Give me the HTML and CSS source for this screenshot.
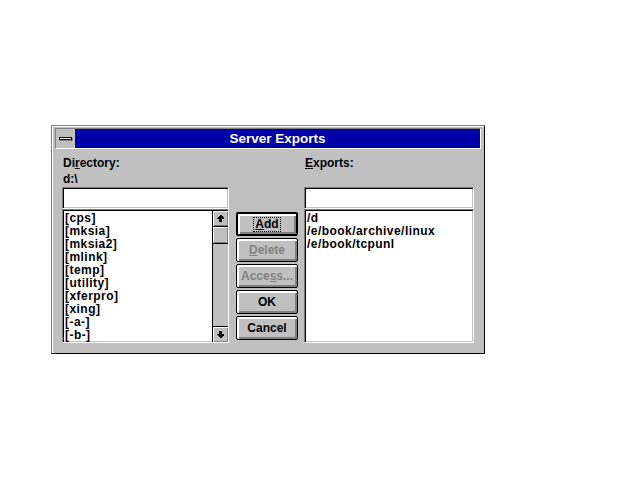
FILE: index.html
```html
<!DOCTYPE html>
<html lang="en">
  <head>
    <meta charset="UTF-8" />
    <title>Server Exports</title>
    <link rel="stylesheet" href="styles.css">
  </head>
  <body>
    <div class="dialog">
      <div class="caption">
        <div class="sysmenu"><span class="dash"></span></div>
        <div class="title">Server Exports</div>
      </div>

      <div class="content">
        <!-- directory side -->
        <div class="left">
          <div class="label">Di<u>r</u>ectory:</div>
          <div class="label">d:\</div>
          <div class="edit"></div>
          <div class="listbox">
            <ul class="items">
              <li>[cps]</li>
              <li>[mksia]</li>
              <li>[mksia2]</li>
              <li>[mlink]</li>
              <li>[temp]</li>
              <li>[utility]</li>
              <li>[xferpro]</li>
              <li>[xing]</li>
              <li>[-a-]</li>
              <li>[-b-]</li>
            </ul>
            <div class="scrollbar">
              <div class="sb-btn up">
                <svg width="7" height="7" viewBox="0 0 7 7" shape-rendering="crispEdges"><polygon points="3,0 4,0 7,3 7,4 5,4 5,7 2,7 2,4 0,4 0,3" fill="#000"/></svg>
              </div>
              <div class="sb-thumb"></div>
              <div class="sb-track"></div>
              <div class="sb-btn down">
                <svg width="7" height="7" viewBox="0 0 7 7" shape-rendering="crispEdges"><polygon points="2,0 5,0 5,3 7,3 7,4 4,7 3,7 0,4 0,3 2,3" fill="#000"/></svg>
              </div>
            </div>
          </div>
        </div>

        <div class="buttons">
          <button class="btn default"><span class="focus"><u>A</u>dd</span></button>
          <button class="btn disabled"><u>D</u>elete</button>
          <button class="btn disabled">Acce<u>s</u>s...</button>
          <button class="btn">OK</button>
          <button class="btn">Cancel</button>
        </div>

        <!-- exports side -->
        <div class="right">
          <div class="label"><u>E</u>xports:</div>
          <div class="label"></div>
          <div class="edit"></div>
          <div class="listbox">
            <ul class="items">
              <li>/d</li>
              <li>/e/book/archive/linux</li>
              <li>/e/book/tcpunl</li>
            </ul>
          </div>
        </div>
      </div>
    </div>
  </body>
</html>
```

FILE: styles.css
```css
body {
    margin: 0;
    background: #fff;
    font-family: "Liberation Sans", Arial, sans-serif;
    color: #000;
}

.dialog {
    margin: 125px 0 0 51px;
    width: 434px;
    height: 229px;
    box-sizing: border-box;
    background: #c0c0c0;
    border: 1px solid;
    border-color: #808080 #000 #000 #808080;
    box-shadow: inset 1px 1px #fff;
    padding: 2px 3px 0 3px;
}

.caption {
    display: flex;
    height: 21px;
    box-sizing: border-box;
    border: 1px solid;
    border-color: #808080 #fff #fff #808080;
}

.sysmenu {
    width: 19px;
    background: #c0c0c0;
    display: flex;
    align-items: center;
    padding-left: 3px;
    box-sizing: border-box;
}

.dash {
    display: block;
    width: 11px;
    height: 1px;
    background: #fff;
    border: 1px solid #000;
    box-shadow: 1px 1px #808080;
}

.title {
    flex: 1;
    background: #0000a8;
    color: #fff;
    font-weight: bold;
    font-size: 13.5px;
    line-height: 19px;
    text-align: center;
}

.content {
    display: flex;
    padding: 6px 7px 0 7px;
}

.left {
    width: 167px;
}

.right {
    width: 170px;
    margin-left: 6px;
}

.label {
    height: 16px;
    line-height: 16px;
    font-size: 12px;
    font-weight: bold;
    padding-left: 1px;
}

.edit,
.listbox {
    box-sizing: border-box;
    background: #fff;
    border: 1px solid;
    border-color: #808080 #fff #fff #808080;
    box-shadow: inset 1px 1px #000, inset -1px -1px #c0c0c0;
}

.edit {
    height: 22px;
}

.listbox {
    height: 134px;
    display: flex;
}

.items {
    flex: 1;
    list-style: none;
    margin: 0;
    padding: 2px 0 0 2px;
    font-size: 12px;
    letter-spacing: 0.45px;
    font-weight: bold;
    line-height: 13px;
}

.scrollbar {
    width: 16px;
    margin-top: 1px;
    height: 131px;
    box-sizing: border-box;
    border-left: 1px solid #000;
    display: flex;
    flex-direction: column;
    background: #c0c0c0;
}

.sb-btn {
    height: 16px;
    box-sizing: border-box;
    display: flex;
    align-items: center;
    justify-content: center;
    background: #c0c0c0;
    box-shadow: inset 1px 1px #fff, inset -1px -1px #808080;
}

.sb-btn.up {
    border-bottom: 1px solid #000;
}

.sb-btn.down {
    border-top: 1px solid #000;
}

.sb-thumb {
    height: 17px;
    box-sizing: border-box;
    border-bottom: 1px solid #000;
    box-shadow: inset 1px 1px #fff, inset -1px -1px #808080;
}

.sb-track {
    flex: 1;
}

.buttons {
    width: 62px;
    margin-left: 7px;
    padding-top: 57px;
    display: flex;
    flex-direction: column;
    gap: 2px;
}

.btn {
    height: 24px;
    padding: 0;
    margin: 0;
    box-sizing: border-box;
    background: #c0c0c0;
    border: 1px solid #000;
    border-radius: 2px;
    box-shadow: inset 2px 2px #fff, inset -2px -2px #808080;
    font-family: "Liberation Sans", Arial, sans-serif;
    font-size: 12px;
    font-weight: bold;
    color: #000;
    display: flex;
    align-items: center;
    justify-content: center;
}

.btn.default {
    border-width: 2px;
}

.btn.disabled {
    color: #808080;
}

.focus {
    border: 1px dotted #000;
    padding: 0 1px;
    line-height: 13px;
}
```
